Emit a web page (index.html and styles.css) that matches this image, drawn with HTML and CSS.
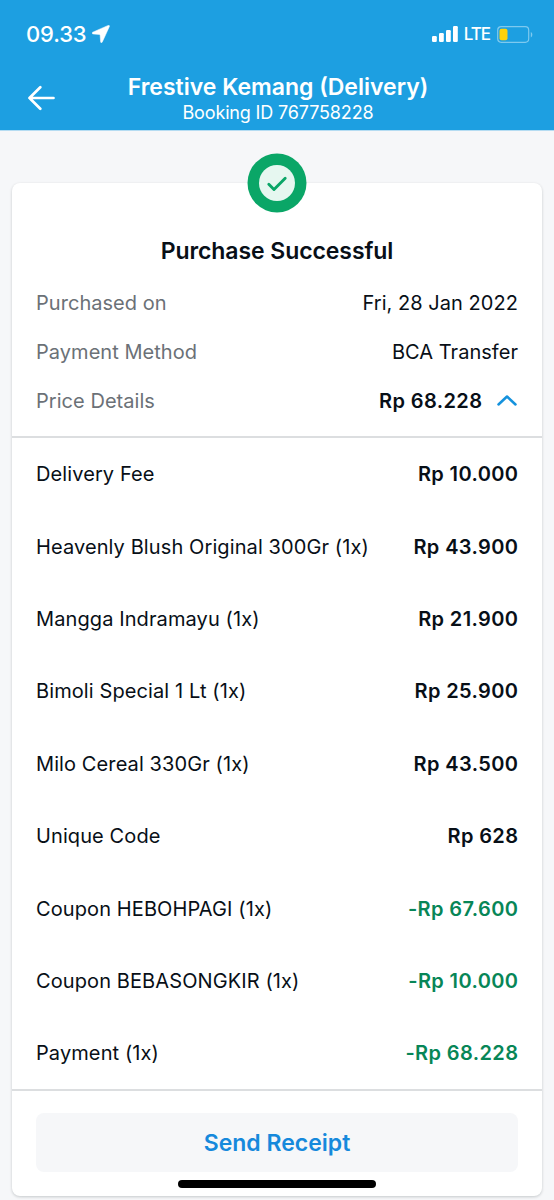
FILE: index.html
```html
<!DOCTYPE html>
<html lang="en">
<head>
  <meta charset="UTF-8">
  <title>Purchase Successful</title>
  <link rel="stylesheet" href="styles.css">
</head>
<body>
  <header>
    <div class="status-bar">
      <div class="clock">
        <span class="time">09.33</span>
        <svg width="18" height="18" viewBox="0 0 18 18"><path d="M16.2.4.7 7.2c-1 .5-.8 1.500.2 1.700l6.500.500c.5 0 .7.200.7.700l.5 6.700c.1 1.200 1.200 1.300 1.700.2L17.400 1.500c.3-.8-.3-1.400-1.200-1.100z" fill="#fff" stroke="#fff" stroke-width=".5"/></svg>
      </div>
      <div class="network">
        <svg width="26" height="16" viewBox="0 0 26 16" fill="#fff"><rect x="0" y="10" width="4.800" height="6" rx="1.200"/><rect x="7" y="7" width="4.800" height="9" rx="1.200"/><rect x="14" y="4" width="4.800" height="12" rx="1.200"/><rect x="21" y="0" width="4.800" height="16" rx="1.200"/></svg>
        <span class="lte">LTE</span>
        <svg width="36" height="17" viewBox="0 0 36 17"><rect x=".7" y=".7" width="31" height="15.600" rx="3.500" fill="none" stroke="#7ec9ef" stroke-width="1.200"/><rect x="2.500" y="2.700" width="8" height="11.600" rx="2" fill="#ffd20a"/><path d="M33.800 6v5.400c2-.7 2-4.700 0-5.400z" fill="#7ec9ef"/></svg>
      </div>
    </div>
    <div class="nav-bar">
      <svg class="back" width="28" height="26" viewBox="0 0 28 26" fill="none" stroke="#fff" stroke-width="2.700" stroke-linecap="round" stroke-linejoin="round"><path d="M25.500 13H1.500M12.300 2.300 1.500 13l10.800 10.700"/></svg>
      <div class="heading">
        <h1>Frestive Kemang (Delivery)</h1>
        <div class="booking">Booking ID 767758228</div>
      </div>
    </div>
  </header>
  <main class="card">
    <svg class="check" width="60" height="60" viewBox="0 0 60 60"><circle cx="30" cy="30" r="29.500" fill="#0aa667"/><circle cx="30" cy="30" r="18" fill="#e6f7f0"/><path d="m21.800 31.300 5.200 5.200 11.200-11.200" fill="none" stroke="#0aa667" stroke-width="2.900" stroke-linecap="round" stroke-linejoin="round"/></svg>
    <h2>Purchase Successful</h2>
    <section class="summary">
      <div class="row"><span class="label">Purchased on</span><span>Fri, 28 Jan 2022</span></div>
      <div class="row"><span class="label">Payment Method</span><span>BCA Transfer</span></div>
      <div class="row">
        <span class="label">Price Details</span>
        <span class="total"><b>Rp 68.228</b><svg width="20" height="12" viewBox="0 0 20 12"><path d="m1.500 10.500 8.500-8 8.500 8" fill="none" stroke="#1592dd" stroke-width="2.500" stroke-linecap="round" stroke-linejoin="round"/></svg></span>
      </div>
    </section>
    <section class="items">
      <div class="row"><span>Delivery Fee</span><b>Rp 10.000</b></div>
      <div class="row"><span>Heavenly Blush Original 300Gr (1x)</span><b>Rp 43.900</b></div>
      <div class="row"><span>Mangga Indramayu (1x)</span><b>Rp 21.900</b></div>
      <div class="row"><span>Bimoli Special 1 Lt (1x)</span><b>Rp 25.900</b></div>
      <div class="row"><span>Milo Cereal 330Gr (1x)</span><b>Rp 43.500</b></div>
      <div class="row"><span>Unique Code</span><b>Rp 628</b></div>
      <div class="row"><span>Coupon HEBOHPAGI (1x)</span><b class="minus">-Rp 67.600</b></div>
      <div class="row"><span>Coupon BEBASONGKIR (1x)</span><b class="minus">-Rp 10.000</b></div>
      <div class="row"><span>Payment (1x)</span><b class="minus">-Rp 68.228</b></div>
    </section>
    <button class="send">Send Receipt</button>
  </main>
  <div class="home-indicator"></div>
</body>
</html>
```
FILE: styles.css
```css
* { box-sizing: border-box; }
body { margin: 0; height: 1200px; overflow: hidden; background: #f6f7f9; color: #080f17; font-family: Inter, "Liberation Sans", sans-serif; font-size: 20px; line-height: 24px; }
svg { display: block; flex: none; }
header { height: 131px; background: #1d9fe1; color: #fff; border-bottom: 1px solid #b5dcf2; }
.status-bar { display: flex; justify-content: space-between; align-items: center; height: 68px; padding: 0 21px 0 26px; }
.clock, .network { display: flex; align-items: center; }
.clock { gap: 6px; }
.time { font-size: 22px; font-weight: 500; letter-spacing: -0.15px; }
.network { gap: 6px; }
.lte { font-size: 17px; font-weight: 500; letter-spacing: -1px; padding-right: 1px; }
.nav-bar { display: grid; grid-template-columns: 28px 1fr 28px; padding: 7px 26px 0 28px; }
.back { margin-top: 10px; }
.heading { text-align: center; }
h1 { margin: 0; font-size: 23px; line-height: 25px; font-weight: 600; }
.booking { font-size: 18px; line-height: 25px; letter-spacing: -0.15px; }
.card { position: relative; height: 1013px; margin: 52px 12px 0; background: #fff; border-radius: 8px; box-shadow: 0 1px 3px rgba(3, 18, 26, 0.2); }
.check { position: absolute; top: -30px; left: 235px; }
h2 { margin: 0; padding-top: 55px; font-size: 23px; line-height: 27px; font-weight: 600; letter-spacing: -0.08px; text-align: center; }
.row { display: flex; justify-content: space-between; align-items: center; padding: 0 24px; white-space: nowrap; }
.summary { height: 173px; padding-top: 14px; border-bottom: 2px solid #dcdee0; }
.summary .row { height: 48.7px; letter-spacing: 0.04px; }
.label { color: #6b7177; }
b { font-weight: 600; letter-spacing: 0.38px; margin-right: -0.38px; }
.total { display: flex; align-items: center; gap: 15px; padding-right: 1px; }
.total svg { margin-top: -2px; }
.items { height: 653px; border-bottom: 2px solid #dcdee0; }
.items .row { height: 72.4px; letter-spacing: 0.1px; }
.minus { color: #078657; }
.send { display: block; width: 482px; height: 59px; margin: 22px 24px 0; border: 0; border-radius: 8px; background: #f6f7f9; color: #1689dc; font: 600 23px Inter, sans-serif; }
.home-indicator { position: fixed; left: 178px; bottom: 12px; width: 198px; height: 8px; border-radius: 4px; background: #000; }
```
